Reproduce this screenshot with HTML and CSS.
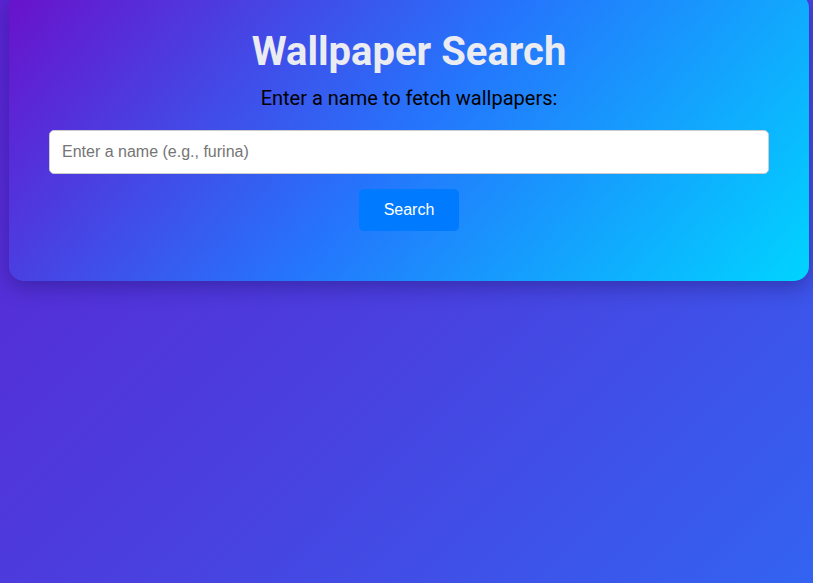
FILE: index.html
```html
<!DOCTYPE html>
<html lang="en">
<head>
<meta charset="utf-8">
<title>Wallpaper Search</title>
<link rel="stylesheet" href="styles.css">
</head>
<body>
  <main class="card">
    <h1 class="title">Wallpaper Search</h1>
    <p class="subtitle">Enter a name to fetch wallpapers:</p>
    <input class="search-input" type="text" placeholder="Enter a name (e.g., furina)">
    <button class="search-btn" type="button">Search</button>
  </main>
</body>
</html>
```

FILE: styles.css
```css
html, body {
  margin: 0;
  height: 100%;
}

body {
  background: linear-gradient(135deg, #5b24d3 0%, #4a3fdf 50%, #3363f1 100%);
  font-family: Roboto, "Liberation Sans", sans-serif;
  padding-left: 9px;
  overflow: hidden;
}

.card {
  box-sizing: border-box;
  width: 800px;
  margin-top: -7px;
  padding: 35px 40px 50px;
  border-radius: 15px;
  background: linear-gradient(130deg, #6a11cb 0%, #2575fc 50%, #00d4ff 100%);
  box-shadow: 0 6px 20px rgba(20, 10, 80, 0.35);
  display: flex;
  flex-direction: column;
  align-items: center;
}

.title {
  margin: 0;
  font-size: 40px;
  font-weight: 700;
  color: #ebebf2;
}

.subtitle {
  margin: 11px 0 0;
  font-size: 20px;
  color: #000;
}

.search-input {
  box-sizing: border-box;
  width: 100%;
  height: 44px;
  margin-top: 20px;
  padding: 0 12px;
  border: 1px solid #ccc;
  border-radius: 5px;
  background: #fff;
  font-family: "Liberation Sans", Arial, sans-serif;
  font-size: 16px;
  color: #333;
  outline: none;
}

.search-input::placeholder {
  color: #757575;
}

.search-btn {
  width: 100px;
  height: 42px;
  margin-top: 15px;
  border: none;
  border-radius: 5px;
  background: #007bff;
  color: #fff;
  font-family: "Liberation Sans", Arial, sans-serif;
  font-size: 16px;
  cursor: pointer;
}
```
